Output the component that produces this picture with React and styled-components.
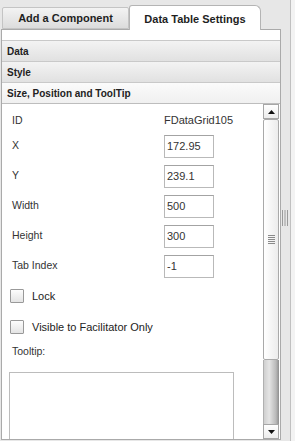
import React from "react";
import styled, { createGlobalStyle } from "styled-components";

const props = [
  { label: "X", value: "172.95" },
  { label: "Y", value: "239.1" },
  { label: "Width", value: "500" },
  { label: "Height", value: "300" },
  { label: "Tab Index", value: "-1" },
];

const sections = ["Data", "Style", "Size, Position and ToolTip"];

const GlobalStyle = createGlobalStyle`
  html, body {
    margin: 0;
    padding: 0;
    background: #e7e7e7;
    font-family: "Liberation Sans", Arial, sans-serif;
  }
`;

const Frame = styled.div`
  width: 295px;
  height: 441px;
  display: flex;
  overflow: hidden;
`;

const Sidebar = styled.div`
  width: 281px;
  display: flex;
  flex-direction: column;
`;

const TabStrip = styled.div`
  height: 30px;
  display: flex;
  align-items: flex-end;
  padding-left: 2px;
  position: relative;
  z-index: 2;
`;

const Tab = styled.div`
  box-sizing: border-box;
  height: ${(p) => (p.$active ? "25px" : "22px")};
  width: ${(p) => (p.$active ? "132px" : "127px")};
  margin-bottom: ${(p) => (p.$active ? "0" : "1px")};
  border: 1px solid ${(p) => (p.$active ? "#b4b4b4" : "#c4c4c4")};
  border-bottom: ${(p) => (p.$active ? "none" : "1px solid #c4c4c4")};
  border-radius: ${(p) => (p.$active ? "3px 6px 0 0" : "2px 2px 0 0")};
  background: ${(p) =>
    p.$active ? "#ffffff" : "linear-gradient(#f3f3f3, #dcdcdc)"};
  color: #1e1e1e;
  font-size: 11px;
  font-weight: bold;
  display: flex;
  align-items: center;
  justify-content: center;
  padding-top: ${(p) => (p.$active ? "2px" : "0")};
`;

const Panel = styled.div`
  flex: 1;
  margin: -1px 0 1px 1px;
  box-sizing: border-box;
  border: 1px solid #aaaaaa;
  background: #ffffff;
  padding-top: 10px;
  display: flex;
  flex-direction: column;
  min-height: 0;
`;

const SectionHeader = styled.div`
  box-sizing: border-box;
  height: 21px;
  border-top: 1px solid #c9c9c9;
  background: ${(p) =>
    p.$open
      ? "linear-gradient(#fbfbfb, #f0f0f0)"
      : "linear-gradient(#f3f3f3, #e1e1e1)"};
  padding-left: 5px;
  display: flex;
  align-items: center;
  font-size: 10px;
  font-weight: bold;
  color: #222;
`;

const Body = styled.div`
  flex: 1;
  display: flex;
  min-height: 0;
  border-top: 1px solid #bdbdbd;
`;

const Form = styled.div`
  flex: 1;
  padding: 6px 0 0 8px;
  overflow: hidden;
  font-size: 10.5px;
  color: #333;
`;

const Row = styled.div`
  height: ${(p) => p.$h}px;
  display: flex;
  align-items: flex-start;
`;

const Label = styled.div`
  width: 152px;
  padding-left: 2px;
  line-height: 20px;
`;

const Value = styled.div`
  line-height: 20px;
  font-size: 11px;
  color: #333;
`;

const Input = styled.div`
  box-sizing: border-box;
  width: 50px;
  height: 23px;
  border: 1px solid #b9b9b9;
  border-top-color: #a3a3a3;
  padding: 0 2px;
  line-height: 21px;
  font-size: 11px;
  color: #333;
`;

const CheckRow = styled.div`
  height: ${(p) => p.$h}px;
  padding-top: 4px;
  box-sizing: border-box;
  display: flex;
  align-items: flex-start;
`;

const CheckInner = styled.div`
  display: flex;
  align-items: center;
  height: 14px;
  gap: 8px;
  font-size: 11px;
  color: #222;
`;

const Box = styled.span`
  box-sizing: border-box;
  width: 14px;
  height: 14px;
  border: 1px solid #999;
  border-radius: 1px;
  background: linear-gradient(#fdfdfd, #e4e4e4);
`;

const TipLabel = styled.div`
  padding-left: 2px;
  line-height: 12px;
  margin-bottom: 15px;
`;

const TextArea = styled.div`
  box-sizing: border-box;
  width: 225px;
  height: 110px;
  margin-left: -1px;
  border: 1px solid #bcbcbc;
`;

const Scrollbar = styled.div`
  width: 16px;
  margin-right: 1px;
  display: flex;
  flex-direction: column;
`;

const ArrowBtn = styled.div`
  box-sizing: border-box;
  height: 15px;
  flex-shrink: 0;
  border: 1px solid #a6a6a6;
  background: linear-gradient(#ffffff, #ececec);
  display: flex;
  align-items: center;
  justify-content: center;
`;

const Thumb = styled.div`
  box-sizing: border-box;
  height: 241px;
  flex-shrink: 0;
  border: 1px solid #a9a9a9;
  border-radius: 2px;
  background: linear-gradient(to right, #ffffff, #ececec);
  display: flex;
  align-items: center;
  justify-content: center;
`;

const Track = styled.div`
  flex: 1;
  background: linear-gradient(to right, #cfcfcf, #e4e4e4 35%, #b9b9b9 80%, #8e8e8e);
  border-left: 1px solid #b0b0b0;
`;

const Splitter = styled.div`
  width: 9px;
  display: flex;
  align-items: center;
  justify-content: center;
  padding-bottom: 6px;
  box-sizing: border-box;
`;

const Divider = styled.div`
  width: 1px;
  background: #c0c0c0;
`;

const RightEdge = styled.div`
  flex: 1;
  background: #f3f3f3;
`;

const Arrow = ({ up }) => (
  <svg width="7" height="4" viewBox="0 0 7 4">
    <polygon points={up ? "0,4 7,4 3.5,0" : "0,0 7,0 3.5,4"} fill="#111" />
  </svg>
);

const ThumbGrip = () => (
  <svg width="7" height="10" viewBox="0 0 7 10">
    {[0.5, 2.5, 4.5, 6.5, 8.5].map((y) => (
      <line key={y} x1="0" y1={y} x2="7" y2={y} stroke="#8a8a8a" strokeWidth="1" />
    ))}
  </svg>
);

const SplitGrip = () => (
  <svg width="7" height="16" viewBox="0 0 7 16">
    {[0.5, 3, 5.5].map((x) => (
      <line key={x} x1={x} y1="0" x2={x} y2="16" stroke="#9a9a9a" strokeWidth="1" />
    ))}
  </svg>
);

const App = () => {
  return (
    <>
      <GlobalStyle />
      <Frame>
        <Sidebar>
          <TabStrip>
            <Tab>Add a Component</Tab>
            <Tab $active>Data Table Settings</Tab>
          </TabStrip>
          <Panel>
            {sections.map((s, i) => (
              <SectionHeader key={s} $open={i === sections.length - 1}>
                {s}
              </SectionHeader>
            ))}
            <Body>
              <Form>
                <Row $h={25}>
                  <Label>ID</Label>
                  <Value>FDataGrid105</Value>
                </Row>
                {props.map((p) => (
                  <Row key={p.label} $h={30}>
                    <Label>{p.label}</Label>
                    <Input>{p.value}</Input>
                  </Row>
                ))}
                <CheckRow $h={31}>
                  <CheckInner>
                    <Box />
                    Lock
                  </CheckInner>
                </CheckRow>
                <CheckRow $h={29}>
                  <CheckInner>
                    <Box />
                    Visible to Facilitator Only
                  </CheckInner>
                </CheckRow>
                <TipLabel>Tooltip:</TipLabel>
                <TextArea />
              </Form>
              <Scrollbar>
                <ArrowBtn>
                  <Arrow up />
                </ArrowBtn>
                <Thumb>
                  <ThumbGrip />
                </Thumb>
                <Track />
                <ArrowBtn>
                  <Arrow />
                </ArrowBtn>
              </Scrollbar>
            </Body>
          </Panel>
        </Sidebar>
        <Splitter>
          <SplitGrip />
        </Splitter>
        <Divider />
        <RightEdge />
      </Frame>
    </>
  );
};

export default App;
